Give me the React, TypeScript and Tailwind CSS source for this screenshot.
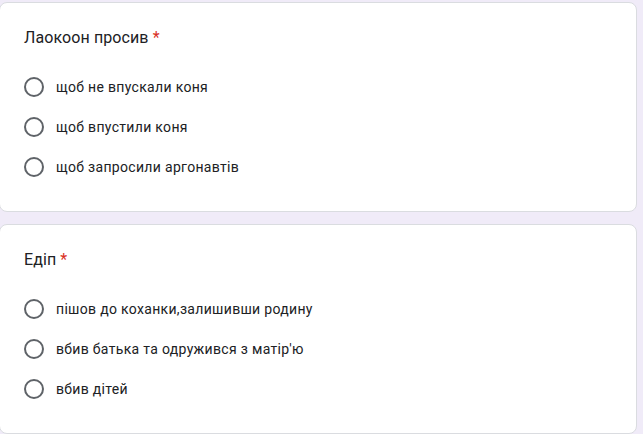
import React from 'react';

type Question = {
  title: string;
  options: string[];
};

const QUESTIONS: Question[] = [
  {
    title: 'Лаокоон просив',
    options: ['щоб не впускали коня', 'щоб впустили коня', 'щоб запросили аргонавтів'],
  },
  {
    title: 'Едіп',
    options: [
      'пішов до коханки,залишивши родину',
      "вбив батька та одружився з матір'ю",
      'вбив дітей',
    ],
  },
];

const QuestionCard: React.FC<{ q: Question }> = ({ q }) => (
  <div className="-ml-px w-[638px] h-[210px] rounded-lg border border-[#dadce0] bg-white pt-[23px] pl-[24px] pr-6">
    <div className="text-[16px] leading-6 text-[#202124] tracking-[0.1px]">
      {q.title} <span className="text-[#d93025]">*</span>
    </div>
    <div className="mt-[17px] flex flex-col">
      {q.options.map((opt) => (
        <label key={opt} className="flex h-10 items-center">
          <span className="h-5 w-5 shrink-0 rounded-full border-2 border-[#5f6368]" />
          <span className="ml-3 text-[14px] leading-5 text-[#202124] tracking-[0.32px]">{opt}</span>
        </label>
      ))}
    </div>
  </div>
);

export default function App() {
  return (
    <div
      className="h-[434px] w-[643px] overflow-hidden bg-[#f0ebf8] pt-[2px]"
      style={{ fontFamily: 'Roboto, "Noto Sans", sans-serif' }}
    >
      <div className="flex flex-col gap-3">
        {QUESTIONS.map((q) => (
          <QuestionCard key={q.title} q={q} />
        ))}
      </div>
    </div>
  );
}
